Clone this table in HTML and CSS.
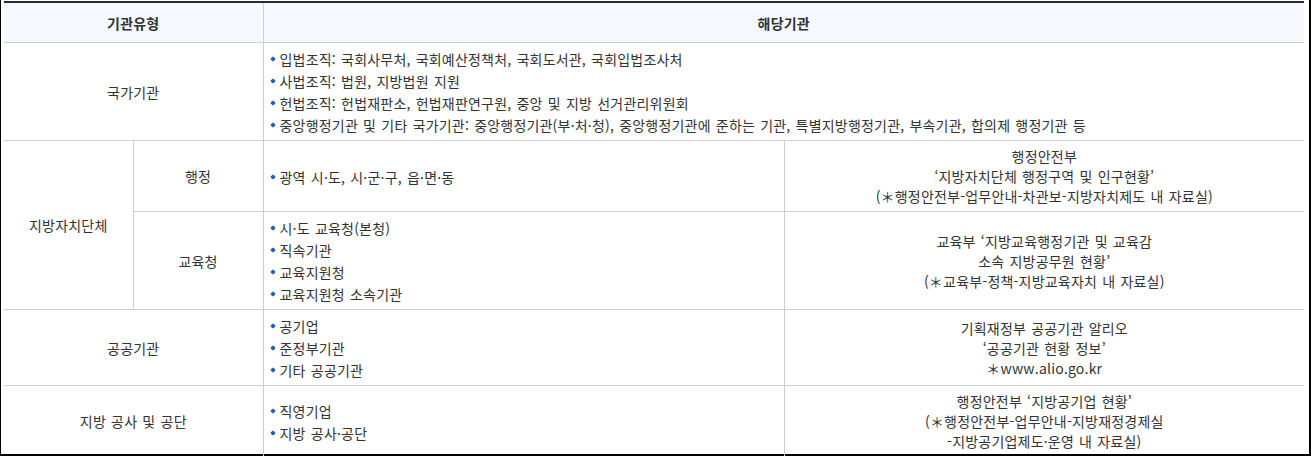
FILE: index.html
```html
<!DOCTYPE html>
<html lang="ko">
<head>
<meta charset="utf-8">
<title>기관유형별 해당기관</title>
<link rel="stylesheet" href="styles.css">
</head>
<body>
<div class="frame">
  <table class="org-table">
    <colgroup>
      <col class="c1"><col class="c2"><col class="c3"><col class="c4">
    </colgroup>
    <thead>
      <tr>
        <th colspan="2">기관유형</th>
        <th colspan="2">해당기관</th>
      </tr>
    </thead>
    <tbody>
      <tr>
        <td colspan="2" class="type">국가기관</td>
        <td colspan="2" class="list">
          <ul>
            <li>입법조직: 국회사무처, 국회예산정책처, 국회도서관, 국회입법조사처</li>
            <li>사법조직: 법원, 지방법원 지원</li>
            <li>헌법조직: 헌법재판소, 헌법재판연구원, 중앙 및 지방 선거관리위원회</li>
            <li>중앙행정기관 및 기타 국가기관: 중앙행정기관(부·처·청), 중앙행정기관에 준하는 기관, 특별지방행정기관, 부속기관, 합의제 행정기관 등</li>
          </ul>
        </td>
      </tr>
      <tr>
        <td rowspan="2" class="type">지방자치단체</td>
        <td class="type">행정</td>
        <td class="list">
          <ul>
            <li>광역 시·도, 시·군·구, 읍·면·동</li>
          </ul>
        </td>
        <td class="src">행정안전부<br>‘지방자치단체 행정구역 및 인구현황’<br>(＊행정안전부-업무안내-차관보-지방자치제도 내 자료실)</td>
      </tr>
      <tr>
        <td class="type">교육청</td>
        <td class="list">
          <ul>
            <li>시·도 교육청(본청)</li>
            <li>직속기관</li>
            <li>교육지원청</li>
            <li>교육지원청 소속기관</li>
          </ul>
        </td>
        <td class="src">교육부 ‘지방교육행정기관 및 교육감<br>소속 지방공무원 현황’<br>(＊교육부-정책-지방교육자치 내 자료실)</td>
      </tr>
      <tr>
        <td colspan="2" class="type">공공기관</td>
        <td class="list">
          <ul>
            <li>공기업</li>
            <li>준정부기관</li>
            <li>기타 공공기관</li>
          </ul>
        </td>
        <td class="src">기획재정부 공공기관 알리오<br>‘공공기관 현황 정보’<br>＊www.alio.go.kr</td>
      </tr>
      <tr>
        <td colspan="2" class="type">지방 공사 및 공단</td>
        <td class="list">
          <ul>
            <li>직영기업</li>
            <li>지방 공사·공단</li>
          </ul>
        </td>
        <td class="src">행정안전부 ‘지방공기업 현황’<br>(＊행정안전부-업무안내-지방재정경제실<br>-지방공기업제도·운영 내 자료실)</td>
      </tr>
    </tbody>
  </table>
</div>
</body>
</html>
```
FILE: styles.css
```css
html, body {
  margin: 0;
  padding: 0;
  background: #fff;
}

.frame {
  width: 1305px;
  height: 453px;
  border-left: 1px solid #000;
  border-right: 2px solid #000;
  border-bottom: 2px solid #000;
  padding: 1px 0 0 3px;
  box-sizing: content-box;
}

.org-table {
  width: 1300px;
  border-collapse: collapse;
  table-layout: fixed;
  font-family: "Noto Sans CJK KR", "Noto Sans", sans-serif;
  font-size: 14px;
  letter-spacing: 0.2px;
  word-spacing: 1px;
  color: #333;
  border-top: 2px solid #2b2b2b;
}

.c1 { width: 129px; }
.c2 { width: 130px; }
.c3 { width: 521px; }
.c4 { width: 520px; }

.org-table th {
  height: 39px;
  padding: 0;
  background: #f5f9ff;
  font-weight: bold;
  color: #333;
  border-bottom: 1px solid #cfcfcf;
  border-left: 1px solid #cfcfcf;
  text-align: center;
}

.org-table th:first-child {
  border-left: none;
}

.org-table td {
  border: 1px solid #cfcfcf;
  padding: 5px 6px;
  vertical-align: middle;
  line-height: 20px;
}

.org-table tr td:first-child {
  border-left: none;
}

.org-table tr td:last-child {
  border-right: none;
}

.org-table td.list {
  padding-top: 5px;
  padding-bottom: 4px;
}

.type {
  text-align: center;
}

.src {
  text-align: center;
}

.list ul {
  margin: 0;
  padding: 0;
  list-style: none;
}

.list li {
  position: relative;
  padding-left: 10px;
  line-height: 22px;
}

.list li::before {
  content: "";
  position: absolute;
  left: 1px;
  top: 9px;
  width: 4px;
  height: 4px;
  background: #1f5fbf;
  border-radius: 1px;
  transform: rotate(45deg);
}
```
